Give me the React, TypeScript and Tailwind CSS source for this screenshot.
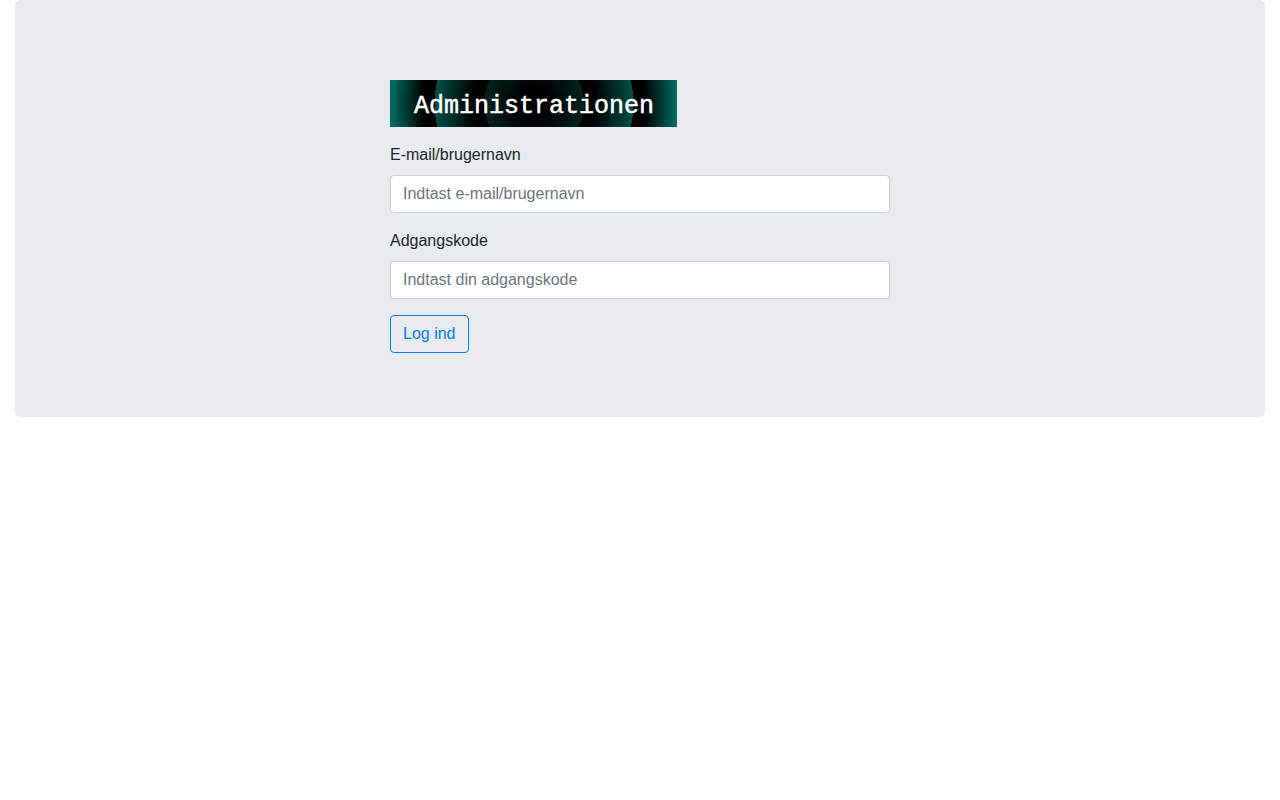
import React from 'react';

const FIELDS = [
  {
    id: 'username',
    type: 'text',
    label: 'E-mail/brugernavn',
    placeholder: 'Indtast e-mail/brugernavn',
  },
  {
    id: 'password',
    type: 'password',
    label: 'Adgangskode',
    placeholder: 'Indtast din adgangskode',
  },
];

const Logo: React.FC = () => (
  <svg width="287" height="47" viewBox="0 0 287 47" role="img" aria-label="Administrationen">
    <defs>
      <radialGradient id="rings" gradientUnits="userSpaceOnUse" cx="144" cy="23.5" r="150">
        <stop offset="0" stopColor="#000000" />
        <stop offset="0.1" stopColor="#000000" />
        <stop offset="0.333" stopColor="#00221e" />
        <stop offset="0.333" stopColor="#000000" />
        <stop offset="0.41" stopColor="#000000" />
        <stop offset="0.663" stopColor="#004f46" />
        <stop offset="0.663" stopColor="#000000" />
        <stop offset="0.74" stopColor="#000000" />
        <stop offset="0.95" stopColor="#006a5e" />
        <stop offset="1" stopColor="#006e61" />
      </radialGradient>
    </defs>
    <rect width="287" height="47" fill="url(#rings)" />
    <text
      x="144"
      y="33"
      textAnchor="middle"
      fill="#ffffff"
      stroke="#ffffff"
      strokeWidth="0.5"
      className="font-['Liberation_Mono',monospace] text-[25px]"
    >
      Administrationen
    </text>
  </svg>
);

const App: React.FC = () => {
  return (
    <div className="px-[15px] font-['Liberation_Sans',Arial,sans-serif] text-base text-[#212529]">
      <main className="rounded-[5px] bg-[#e8ecef] px-8 pt-20 pb-16">
        <form className="mx-auto max-w-[500px] space-y-4" onSubmit={(e) => e.preventDefault()}>
          <Logo />

          {FIELDS.map(({ id, type, label, placeholder }) => (
            <div key={id}>
              <label htmlFor={id} className="mb-2 block">
                {label}
              </label>
              <input
                id={id}
                type={type}
                placeholder={placeholder}
                className="block w-full rounded border border-[#ced4da] bg-white px-3 py-1.5 placeholder:text-[#6c757d] focus:border-[#80bdff] focus:outline-none"
              />
            </div>
          ))}

          <button
            type="submit"
            className="block rounded border border-[#007bff] px-3 py-1.5 text-[#007bff] hover:bg-[#007bff] hover:text-white"
          >
            Log ind
          </button>
        </form>
      </main>
    </div>
  );
};

export default App;
